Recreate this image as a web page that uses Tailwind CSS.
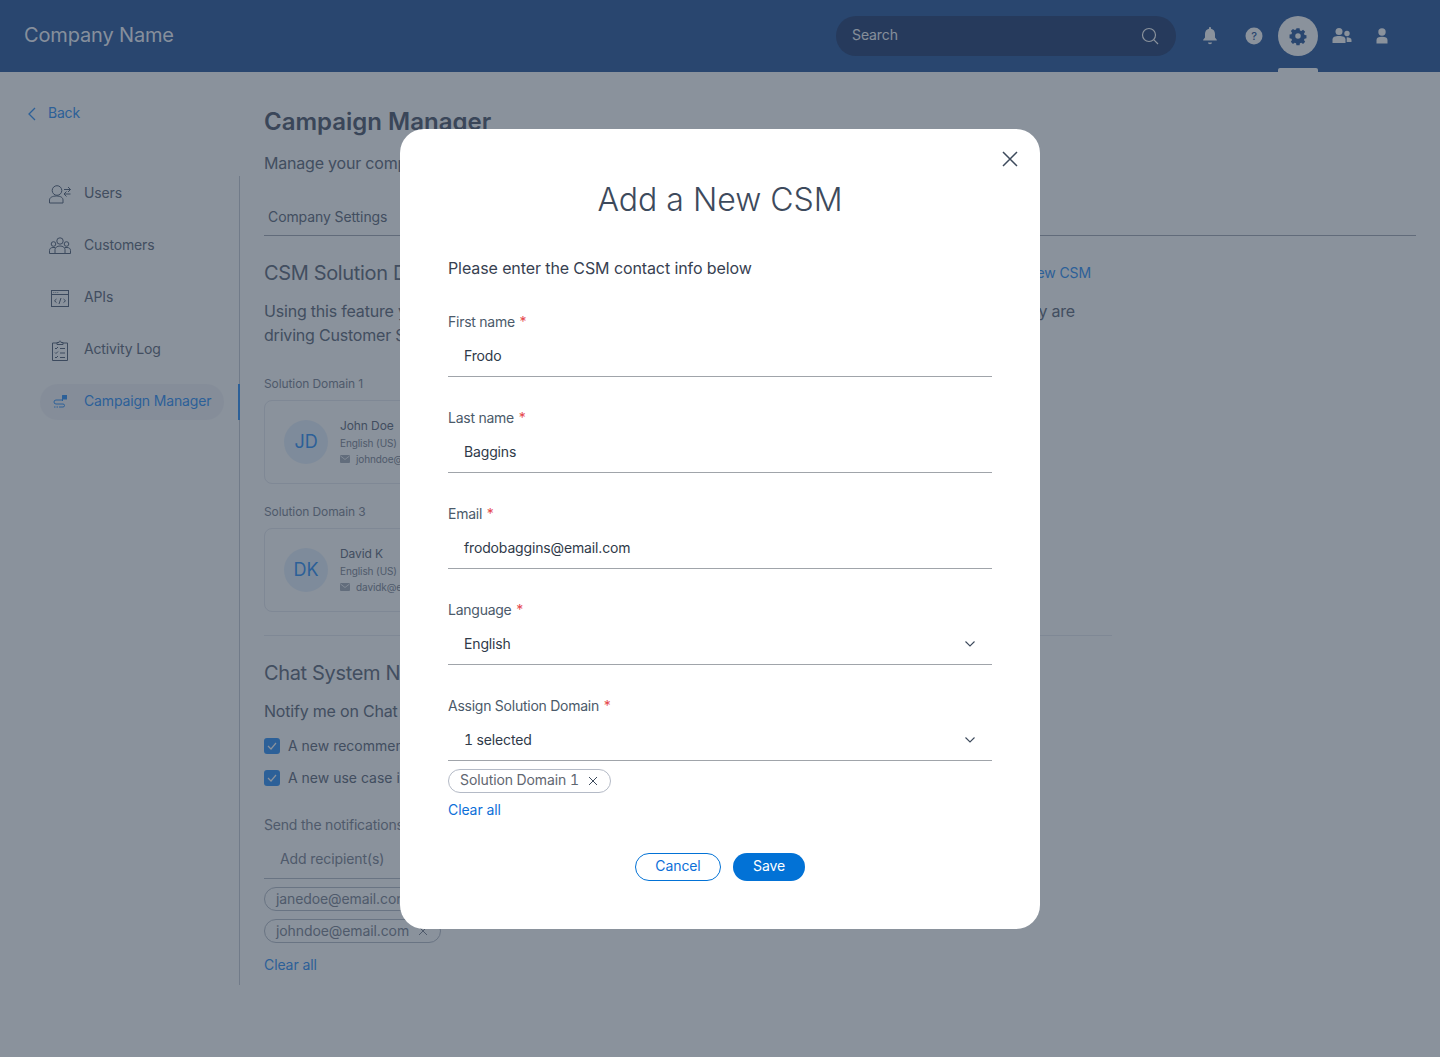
<!DOCTYPE html>
<html lang="en">
<head>
<meta charset="utf-8">
<title>Add a New CSM</title>
<script src="https://cdn.jsdelivr.net/npm/@tailwindcss/browser@4"></script>
</head>
<body class="m-0 font-['Inter','Liberation_Sans',sans-serif]">
<div class="relative w-[1440px] h-[1057px] overflow-hidden bg-[#fafaf8] text-[#6a7280] tracking-[-0.1px]">
  <!-- Header -->
  <header class="h-[72px] bg-[#38629e] flex items-center pl-6 pr-[48px]">
    <div class="text-xl text-white/95 pb-0.5 tracking-[-0.15px]">Company Name</div>
    <div class="ml-auto w-[340px] h-10 rounded-full bg-[#324a78] flex items-center pl-4 pr-4 text-sm text-[#f0f2f5]">
      <span class="pb-0.5">Search</span>
      <svg class="ml-auto" width="20" height="20" viewBox="0 0 20 20" fill="none" stroke="#fafaf8" stroke-width="1.2"><circle cx="9" cy="9" r="6.5"/><path d="M13.7 13.7L18 18"/></svg>
    </div>
    <div class="ml-[24px] w-5 h-5 flex items-center justify-center">
      <svg width="18" height="20" viewBox="0 0 18 20" fill="#fafaf8"><path d="M9 1c.6 0 1 .4 1 1v.7c2.700.5 4 2.700 4 5.300v3.500l1.800 2.300v.7H2.200v-.7L4 11.500V8c0-2.600 1.300-4.800 4-5.300V2c0-.6.400-1 1-1zM7 16.500h4c0 1-.9 1.700-2 1.700s-2-.7-2-1.700z"/></svg>
    </div>
    <div class="ml-[24px] w-5 h-5 flex items-center justify-center">
      <svg width="18" height="18" viewBox="0 0 18 18"><circle cx="9" cy="9" r="8.500" fill="#fafaf8"/><text x="9" y="13" text-anchor="middle" font-size="11" font-weight="500" fill="#38629e" font-family="Inter">?</text></svg>
    </div>
    <div class="relative ml-[14px] w-10 h-10 rounded-full bg-[#fafaf8] flex items-center justify-center">
      <svg width="20" height="20" viewBox="0 0 20 20"><path fill="#38629e" fill-rule="evenodd" d="M8.300 1.800h3.400l.4 2.200 1.500.6 1.900-1.300 2.300 2.300-1.300 1.900.6 1.500 2.100.4v3.200l-2.100.4-.6 1.500 1.300 1.900-2.300 2.300-1.900-1.300-1.500.6-.4 2.100H8.300l-.4-2.100-1.500-.6-1.900 1.300-2.300-2.300 1.300-1.900-.6-1.500-2.100-.4V8.500l2.100-.4.6-1.500-1.300-1.900 2.300-2.300 1.900 1.300 1.500-.6zM10 7a3 3 0 100 6 3 3 0 000-6z" transform="translate(.8 .7) scale(.92)"/></svg>
      <div class="absolute left-0 top-[52px] w-10 h-1 rounded-t-[2px] bg-[#fafaf8]"></div>
    </div>
    <div class="ml-[14px] w-5 h-5 flex items-center justify-center">
      <svg width="20" height="18" viewBox="0 0 20 18" fill="#fafaf8"><circle cx="7" cy="4.500" r="3.500"/><path d="M0.500 16v-3.500C0.500 10 3 9 7 9s6.500 1 6.500 3.500V16z"/><circle cx="15" cy="6.500" r="2.700"/><path d="M14.800 10.300c2.600 0 4.700.9 4.700 2.800V15h-4.800v-3c0-.6 0-1.100.1-1.700z"/></svg>
    </div>
    <div class="ml-5 w-5 h-5 flex items-center justify-center">
      <svg width="14" height="18" viewBox="0 0 14 18" fill="#fafaf8"><circle cx="7" cy="5" r="3.700"/><path d="M1.500 16.500V13c0-2.300 2-3.300 5.500-3.300s5.500 1 5.500 3.300v3.500z"/></svg>
    </div>
  </header>

  <div class="flex">
    <!-- Sidebar -->
    <aside class="w-[240px] shrink-0">
      <a class="h-[104px] pt-8 pl-[27px] flex items-start gap-3 text-sm text-[#3f96f0] tracking-[-0.2px]">
        <svg class="mt-0.5" width="9" height="16" viewBox="0 0 9 16" fill="none" stroke="currentColor" stroke-width="1.300"><path d="M8 2L2 8l6 6"/></svg>
        <span class="leading-[18px]">Back</span>
      </a>
      <nav class="h-[809px] border-r border-[#c9cdd3] flex flex-col gap-4 text-sm tracking-[-0.15px]">
        <a class="h-9 flex items-center pl-[49px] gap-[13px]">
          <svg width="22" height="20" viewBox="0 0 22 20" fill="none" stroke="#5f6b7d" stroke-width="1"><circle cx="8" cy="6.500" r="4.800"/><path d="M.5 19v-3c0-2.500 3-4 7-4s6.500 1.500 6.500 4v3z"/><path d="M15 5.500h6.500M19 3l2.500 2.500M21.500 10H15M17.500 7.500L15 10M17.500 12.500L15 10M19 8l2.500-2.500"/></svg>
          <span class="pb-0.5">Users</span>
        </a>
        <a class="h-9 flex items-center pl-[49px] gap-[13px]">
          <svg width="22" height="18" viewBox="0 0 22 18" fill="none" stroke="#5f6b7d" stroke-width="1"><circle cx="11" cy="4" r="3.200"/><circle cx="4.500" cy="7" r="2.300"/><circle cx="17.500" cy="7" r="2.300"/><path d="M6 16.500v-4c0-2 2-3.500 5-3.500s5 1.500 5 3.500v4z"/><path d="M6 16.500H.500v-3c0-2 1.500-3 3.500-3h2M16 16.500h5.500v-3c0-2-1.500-3-3.500-3h-2"/></svg>
          <span class="pb-0.5">Customers</span>
        </a>
        <a class="h-9 flex items-center pl-[51px] gap-[15px]">
          <svg width="18" height="17" viewBox="0 0 18 17" fill="none" stroke="#5f6b7d" stroke-width="1"><rect x=".5" y=".5" width="17" height="16"/><path d="M.5 4.500h17M2.500 2.500h.7M4.500 2.500h.7M6.500 2.500h.7M5.500 9l-2 1.800 2 1.800M12.500 9l2 1.800-2 1.800M10 8l-2 6"/></svg>
          <span class="pb-0.5">APIs</span>
        </a>
        <a class="h-9 flex items-center pl-[52px] gap-4">
          <svg width="16" height="21" viewBox="0 0 16 21" fill="none" stroke="#5f6b7d" stroke-width="1"><path d="M5 3H.5v17.500h15V3H11"/><path d="M5 4.500v-2h2c0-2 2-2 2 0h2v2zM3 8l1 1 2-2M3 12.500l1 1 2-2M3 17l1 1 2-2M8 8.500h5M8 13h5M8 17.500h5"/></svg>
          <span class="pb-0.5">Activity Log</span>
        </a>
        <a class="relative ml-10 w-[184px] h-9 rounded-full bg-[#f1f1f3] flex items-center pl-[13px] gap-[17px] text-[#3f96f0]">
          <svg width="14" height="14" viewBox="0 0 14 14" fill="none" stroke="#3f96f0" stroke-width="1"><path d="M9 5H3a2 2 0 000 4h7a1.500 1.500 0 010 3H6" /><path d="M5 12H0" stroke-dasharray="1.500 1"/><path d="M9.500 6V.5" /><path d="M9.500 .5H14V4H9.500z" fill="#3f96f0"/></svg>
          <span class="pb-0.5">Campaign Manager</span>
          <span class="absolute -right-4 top-0 w-0.5 h-9 bg-[#3f96f0]"></span>
        </a>
      </nav>
    </aside>

    <!-- Main -->
    <main class="pl-6 w-[1176px]">
      <h1 class="pt-[34px] h-[72px] text-2xl font-semibold leading-8 text-[#5a6372] tracking-normal">Campaign Manager</h1>
      <p class="mt-[7px] h-[41px] text-base leading-6 tracking-[-0.2px]">Manage your company settings</p>
      <div class="h-[44px] border-b border-[#a8adb5] flex gap-6 text-sm pl-1 pt-[15px] tracking-[-0.1px]">
        <span class="leading-[20px]">Company Settings</span>
      </div>

      <div class="w-[848px]">
        <div class="mt-[25px] flex items-center justify-between h-6 w-[827px]">
          <h2 class="text-xl leading-6 tracking-[-0.35px]">CSM Solution Domains</h2>
          <a class="text-sm text-[#3f96f0]">Add a New CSM</a>
        </div>
        <div class="mt-[14px] text-base leading-6 tracking-[-0.2px]">
          <div class="flex justify-between w-[811px]"><span>Using this feature you can assign CSMs</span><span>they are</span></div>
          <div>driving Customer Success</div>
        </div>

        <div class="mt-[29px] text-xs leading-4 text-[#858b96]">Solution Domain 1</div>
        <div class="mt-2 h-[84px] w-[400px] rounded-lg border border-[#e4e6ea] flex items-center pl-[19px] gap-3">
          <div class="w-11 h-11 rounded-full bg-[#e3edf6] flex items-center justify-center text-lg text-[#3f96f0]">JD</div>
          <div>
            <div class="text-xs leading-[18px]">John Doe</div>
            <div class="text-[10px] leading-[16px] text-[#858b96]">English (US)</div>
            <div class="flex items-center gap-1.5 text-[10px] leading-[16px] text-[#858b96]">
              <svg width="10" height="8" viewBox="0 0 10 8"><rect width="10" height="8" rx="1" fill="#aab0b8"/><path d="M.5 1L5 4.500 9.500 1" fill="none" stroke="#fafaf8" stroke-width=".8"/></svg>
              <span>johndoe@email.com</span>
            </div>
          </div>
        </div>

        <div class="mt-5 text-xs leading-4 text-[#858b96]">Solution Domain 3</div>
        <div class="mt-2 h-[84px] w-[400px] rounded-lg border border-[#e4e6ea] flex items-center pl-[19px] gap-3">
          <div class="w-11 h-11 rounded-full bg-[#e3edf6] flex items-center justify-center text-lg text-[#3f96f0]">DK</div>
          <div>
            <div class="text-xs leading-[18px]">David K</div>
            <div class="text-[10px] leading-[16px] text-[#858b96]">English (US)</div>
            <div class="flex items-center gap-1.5 text-[10px] leading-[16px] text-[#858b96]">
              <svg width="10" height="8" viewBox="0 0 10 8"><rect width="10" height="8" rx="1" fill="#aab0b8"/><path d="M.5 1L5 4.500 9.500 1" fill="none" stroke="#fafaf8" stroke-width=".8"/></svg>
              <span>davidk@email.com</span>
            </div>
          </div>
        </div>

        <div class="mt-[23px] border-t border-[#e4e6ea]"></div>
        <h2 class="mt-[25px] text-xl leading-6 tracking-[-0.35px]">Chat System Notifications</h2>
        <p class="mt-[14px] text-base leading-6 tracking-[-0.2px]">Notify me on Chat System when</p>
        <div class="mt-[12px] flex flex-col gap-[10px] text-sm tracking-normal">
          <label class="flex items-center gap-2 h-[22px]">
            <span class="w-4 h-4 rounded-[3px] bg-[#3f96f0] flex items-center justify-center"><svg width="10" height="8" viewBox="0 0 10 8" fill="none" stroke="#fafaf8" stroke-width="1.200"><path d="M1 4l3 3 5-6"/></svg></span>
            <span>A new recommendation is available</span>
          </label>
          <label class="flex items-center gap-2 h-[22px]">
            <span class="w-4 h-4 rounded-[3px] bg-[#3f96f0] flex items-center justify-center"><svg width="10" height="8" viewBox="0 0 10 8" fill="none" stroke="#fafaf8" stroke-width="1.200"><path d="M1 4l3 3 5-6"/></svg></span>
            <span>A new use case is available</span>
          </label>
        </div>
        <div class="mt-[26px] text-sm leading-5 text-[#858b96] tracking-[-0.2px]">Send the notifications to</div>
        <div class="mt-2 h-[36px] w-[400px] border-b border-[#b9bec6] pl-4 pt-[6px] text-sm leading-5 text-[#858b96]">Add recipient(s)</div>
        <div class="mt-2 flex flex-col gap-2 items-start text-sm">
          <div class="h-6 rounded-full border border-[#b9bec6] pl-[11px] pr-3 flex items-center gap-[9px] text-[#858b96]">
            <span>janedoe@email.com</span>
            <svg width="10" height="10" viewBox="0 0 10 10" fill="none" stroke="#858b96"><path d="M1 1l8 8M9 1l-8 8"/></svg>
          </div>
          <div class="h-6 rounded-full border border-[#b9bec6] pl-[11px] pr-3 flex items-center gap-[9px] text-[#858b96]">
            <span>johndoe@email.com</span>
            <svg width="10" height="10" viewBox="0 0 10 10" fill="none" stroke="#858b96"><path d="M1 1l8 8M9 1l-8 8"/></svg>
          </div>
        </div>
        <a class="block mt-[12px] text-sm leading-5 text-[#3f96f0]">Clear all</a>
      </div>
    </main>
  </div>

  <!-- Overlay -->
  <div class="absolute inset-0 bg-[#1a2a40]/50 flex items-center justify-center">
    <div role="dialog" class="relative w-[640px] h-[800px] rounded-3xl bg-white px-12 pt-[51px]">
      <button class="absolute right-[21px] top-[21px] w-[18px] h-[18px]" aria-label="Close">
        <svg width="18" height="18" viewBox="0 0 18 18" fill="none" stroke="#3d4a5c" stroke-width="1.500"><path d="M2 2l14 14M16 2L2 16"/></svg>
      </button>
      <h2 class="text-[32px] leading-10 font-light text-center text-[#3d4a5c] tracking-normal">Add a New CSM</h2>
      <p class="mt-[36px] text-base leading-6 text-[#374151]">Please enter the CSM contact info below</p>

      <div class="mt-[32px] h-[96px]">
        <div class="text-sm leading-5 text-[#4b5a6a] tracking-[-0.25px]">First name <span class="text-[#e5484d] ml-px">*</span></div>
        <div class="mt-[5px] h-[40px] border-b border-[#a0a4aa] pl-4 flex items-center text-sm text-[#2f3a49] tracking-[-0.15px]">Frodo</div>
      </div>
      <div class="h-[96px]">
        <div class="text-sm leading-5 text-[#4b5a6a] tracking-[-0.25px]">Last name <span class="text-[#e5484d] ml-px">*</span></div>
        <div class="mt-[5px] h-[40px] border-b border-[#a0a4aa] pl-4 flex items-center text-sm text-[#2f3a49] tracking-[-0.15px]">Baggins</div>
      </div>
      <div class="h-[96px]">
        <div class="text-sm leading-5 text-[#4b5a6a] tracking-[-0.25px]">Email <span class="text-[#e5484d] ml-px">*</span></div>
        <div class="mt-[5px] h-[40px] border-b border-[#a0a4aa] pl-4 flex items-center text-sm text-[#2f3a49] tracking-[-0.15px]">frodobaggins@email.com</div>
      </div>
      <div class="h-[96px]">
        <div class="text-sm leading-5 text-[#4b5a6a] tracking-[-0.25px]">Language <span class="text-[#e5484d] ml-px">*</span></div>
        <div class="mt-[5px] h-[40px] border-b border-[#a0a4aa] pl-4 pr-[17px] flex items-center justify-between text-sm text-[#2f3a49] tracking-[-0.15px]">
          <span>English</span>
          <svg width="10" height="6" viewBox="0 0 10 6" fill="none" stroke="#3d4a5c" stroke-width="1.100"><path d="M.5.5L5 5 9.500.5"/></svg>
        </div>
      </div>
      <div>
        <div class="text-sm leading-5 text-[#4b5a6a] tracking-[-0.25px]">Assign Solution Domain <span class="text-[#e5484d] ml-px">*</span></div>
        <div class="mt-[5px] h-[40px] border-b border-[#a0a4aa] pl-4 pr-[17px] flex items-center justify-between text-sm text-[#2f3a49] tracking-[-0.15px] tabular-nums">
          <span>1 selected</span>
          <svg width="10" height="6" viewBox="0 0 10 6" fill="none" stroke="#3d4a5c" stroke-width="1.100"><path d="M.5.5L5 5 9.500.5"/></svg>
        </div>
      </div>
      <div class="mt-2 flex w-fit h-6 rounded-full border border-[#b4bac6] pl-[11px] pr-3 items-center gap-[9px] text-sm text-[#5f6670] tabular-nums">
        <span class="pb-0.5">Solution Domain 1</span>
        <svg width="10" height="10" viewBox="0 0 10 10" fill="none" stroke="#3d4a5c"><path d="M1 1l8 8M9 1l-8 8"/></svg>
      </div>
      <a class="block mt-[7px] text-sm leading-5 text-[#0d6fd8]">Clear all</a>
      <div class="mt-[33px] flex justify-center gap-3 text-sm">
        <button class="w-[86px] h-7 rounded-full border border-[#0272d6] text-[#0d6fd8] bg-white pb-0.5">Cancel</button>
        <button class="w-[72px] h-7 rounded-full bg-[#0272d6] text-white pb-0.5">Save</button>
      </div>
    </div>
  </div>
</div>
</body>
</html>
